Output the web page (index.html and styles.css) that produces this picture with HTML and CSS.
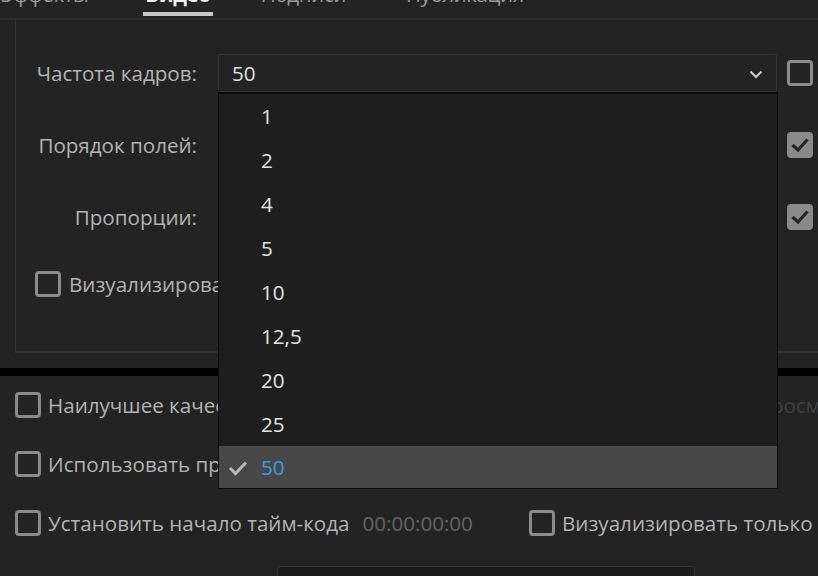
FILE: index.html
```html
<!DOCTYPE html>
<html lang="ru">
<head>
    <meta charset="UTF-8">
    <meta name="viewport" content="width=device-width, initial-scale=1.0">
    <title>Экспорт — Видео</title>
    <link rel="stylesheet" href="styles.css">
</head>
<body>
    <div class="tabs">
        <span class="tab first">Эффекты</span>
        <span class="tab active">Видео</span>
        <span class="tab subs">Подписи</span>
        <span class="tab">Публикация</span>
    </div>

    <div class="panel">
        <div class="row">
            <label class="lbl">Частота кадров:</label>
            <div class="select">
                <span>50</span>
                <svg class="chev" width="14" height="9" viewBox="0 0 14 9"><polyline points="1.5,1.5 7,7 12.5,1.5" fill="none" stroke="#cfcfcf" stroke-width="2"/></svg>

                <ul class="menu">
                    <li>1</li>
                    <li>2</li>
                    <li>4</li>
                    <li>5</li>
                    <li>10</li>
                    <li>12,5</li>
                    <li>20</li>
                    <li>25</li>
                    <li class="sel">
                        <svg class="tick" width="20" height="16" viewBox="0 0 20 16"><polyline points="2,8 7.5,13.5 18,2.5" fill="none" stroke="#b8b8b8" stroke-width="3"/></svg>
                        50
                    </li>
                </ul>
            </div>
            <span class="box"></span>
        </div>
        <div class="row">
            <label class="lbl">Порядок полей:</label>
            <div class="select"></div>
            <span class="box on"><svg width="20" height="16" viewBox="0 0 20 16"><polyline points="2.5,8 8,13 17.5,2.5" fill="none" stroke="#262626" stroke-width="3.2"/></svg></span>
        </div>
        <div class="row">
            <label class="lbl">Пропорции:</label>
            <div class="select"></div>
            <span class="box on"><svg width="20" height="16" viewBox="0 0 20 16"><polyline points="2.5,8 8,13 17.5,2.5" fill="none" stroke="#262626" stroke-width="3.2"/></svg></span>
        </div>
        <div class="check-row">
            <span class="box"></span>
            <span>Визуализировать с максимальной глубиной</span>
        </div>
    </div>

    <div class="bar"></div>

    <div class="options">
        <div class="opt"><span class="box"></span><span>Наилучшее качество визуализации</span></div>
        <div class="opt dim"><span class="box"></span><span>Использовать предпросмотр</span></div>
        <div class="opt"><span class="box"></span><span>Использовать прокси</span></div>
        <div class="opt"></div>
        <div class="opt"><span class="box"></span><span>Установить начало тайм-кода</span><span class="tc">00:00:00:00</span></div>
        <div class="opt"><span class="box"></span><span>Визуализировать только альфа-канал</span></div>
    </div>

    <div class="bottom-box"></div>
</body>
</html>
```

FILE: styles.css
```css
*{margin:0; padding:0; box-sizing:border-box;}
body{width:818px; height:576px; overflow:hidden; background:#232323; color:#b3b3b3; font-family:"Open Sans", sans-serif; font-size:20.6px;}

.tabs{height:20px; border-bottom:2px solid #2b2b2b; display:flex; overflow:hidden;}
.tab{position:relative; margin-top:-16px; line-height:20px; color:#9a9a9a; margin-right:57px; white-space:nowrap; letter-spacing:-0.4px;}
.tab.first{margin-left:1px;}
.tab.active{color:#f2f2f2; font-weight:bold; margin-right:50px;}
.tab.subs{margin-right:60px;}
.tab.active::after{content:""; position:absolute; left:-2px; right:-2px; top:28px; height:4px; background:#c9c9c9;}

.panel{margin-left:15px; height:333px; border-left:1px solid #323232; border-bottom:2px solid #303030; padding-top:34px; display:flex; flex-direction:column;}
.row{display:flex; align-items:center; height:38px; margin-bottom:34px;}
.lbl{width:181px; text-align:right; white-space:nowrap;}
.select{position:relative; margin-left:21px; width:559px; height:38px; border:1px solid #333; border-radius:2px; background:#232323; display:flex; align-items:center; padding-left:13px; color:#e0e0e0;}
.chev{position:absolute; right:13px; top:15px;}
.box{width:26px; height:26px; border:3px solid #8a8a8a; border-radius:4px; flex-shrink:0; display:flex; align-items:center; justify-content:center;}
.box.on{background:#8a8a8a;}
.row .box{margin-left:10px;}
.check-row{display:flex; align-items:center; gap:8px; height:26px; margin-top:1px; margin-left:19px; white-space:nowrap; overflow:hidden;}

.menu{position:absolute; left:-1px; top:37px; width:560px; list-style:none; background:#1e1e1e; border:1px solid #0c0c0c; border-top-width:2px; z-index:5;}
.menu li{height:44px; display:flex; align-items:center; padding-left:42px; color:#e2e2e2; position:relative;}
.menu li.sel{background:#474747; color:#3e9ae0; height:42px;}
.tick{position:absolute; left:9px; top:14px;}

.bar{height:8px; margin-top:15px; background:#000;}

.options{display:grid; grid-template-columns:514px 1fr; row-gap:21px; padding-left:15px; margin-top:10px;}
.opt{display:flex; align-items:center; gap:7px; height:38px; white-space:nowrap; overflow:hidden;}
.opt.dim{color:#555; opacity:.6;}
.opt.dim .box{border-color:#555;}
.tc{margin-left:6px; color:#636363;}

.bottom-box{margin:24px 0 0 277px; width:418px; height:20px; border:1px solid #363636; border-radius:3px; background:#1c1c1c;}
```
